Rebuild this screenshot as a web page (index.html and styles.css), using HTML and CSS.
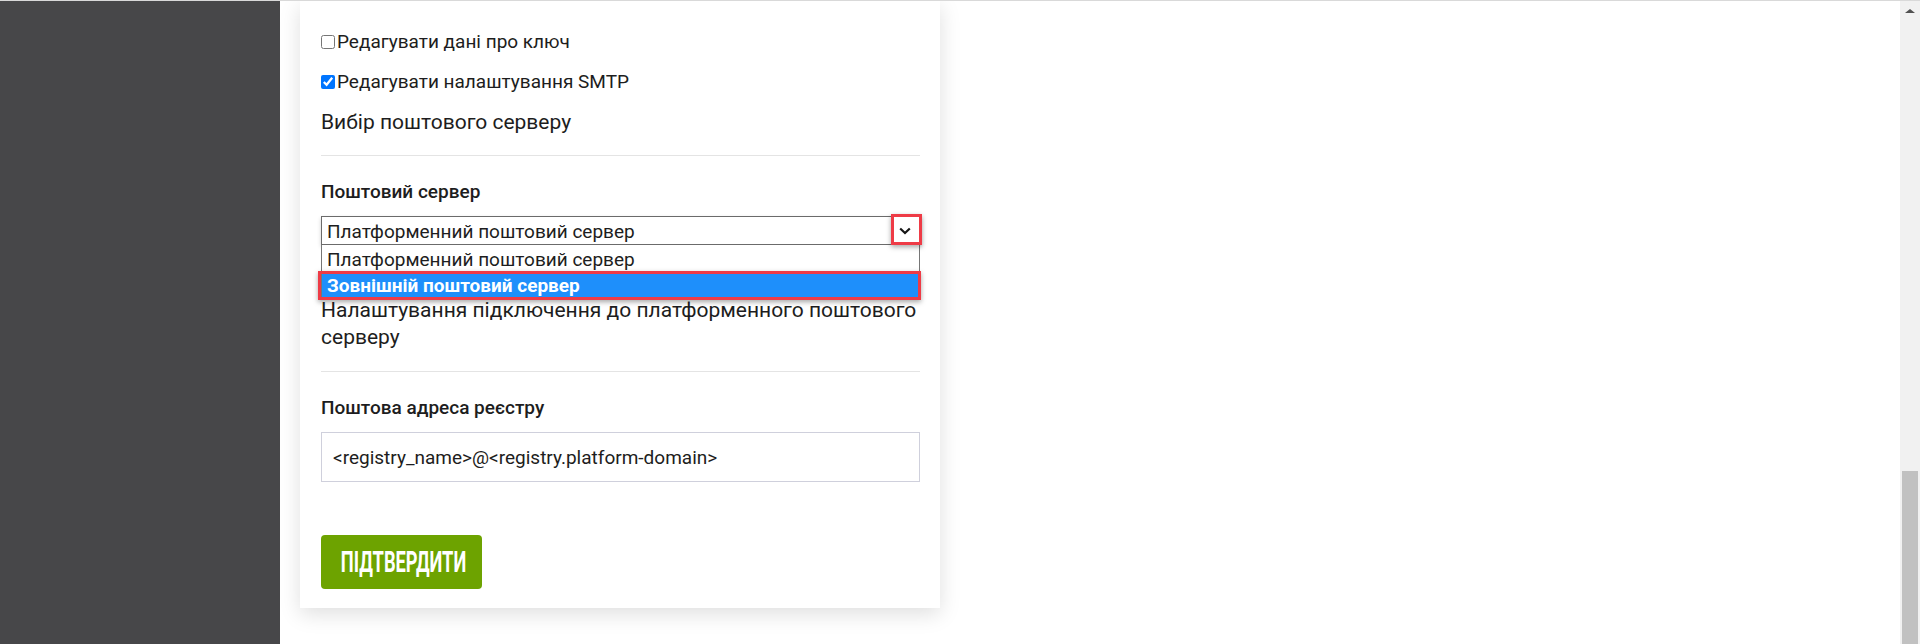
FILE: index.html
```html
<!DOCTYPE html>
<html lang="uk">
<head>
<meta charset="utf-8">
<title>Налаштування SMTP</title>
<link rel="stylesheet" href="styles.css">
</head>
<body>
<div class="app">
  <aside class="sidebar"></aside>
  <main class="main">
    <section class="card">
      <label class="check"><input type="checkbox">Редагувати дані про ключ</label>
      <label class="check"><input type="checkbox" checked>Редагувати налаштування SMTP</label>
      <h2 class="section-title section-title--first">Вибір поштового серверу</h2>
      <hr class="divider">
      <div class="field-label">Поштовий сервер</div>
      <div class="select-wrap">
        <div class="select">
          <span class="select-value">Платформенний поштовий сервер</span>
          <span class="select-arrow"><svg width="12" height="8" viewBox="0 0 12 8"><path d="M1.2 1.5 L6 6 L10.8 1.5" fill="none" stroke="#151515" stroke-width="2.2"/></svg></span>
        </div>
        <ul class="dropdown">
          <li class="option">Платформенний поштовий сервер</li>
          <li class="option option--active">Зовнішній поштовий сервер</li>
        </ul>
        <div class="mark mark--arrow"></div>
        <div class="mark mark--option"></div>
      </div>
      <h2 class="section-title section-title--second">Налаштування підключення до платформенного поштового серверу</h2>
      <hr class="divider">
      <div class="field-label">Поштова адреса реєстру</div>
      <div class="input">&lt;registry_name&gt;@&lt;registry.platform-domain&gt;</div>
      <button class="btn" type="button"><span class="btn-text">ПІДТВЕРДИТИ</span></button>
    </section>
  </main>
  <div class="scrollbar">
    <div class="scroll-up"></div>
    <div class="scroll-track"></div>
    <div class="scroll-thumb"></div>
  </div>
</div>
</body>
</html>
```
FILE: styles.css
```css
* { box-sizing: border-box; }
html, body { margin: 0; padding: 0; height: 100%; overflow: hidden; }
body {
  border-top: 1px solid #d9d9d9;
  font-family: Roboto, "Noto Sans", sans-serif;
  color: #1d1d20;
  background: #ffffff;
}
.app { display: flex; height: 643px; }
.sidebar { width: 280px; flex: none; background: #474749; }
.main { flex: 1; display: flex; align-items: flex-start; padding-left: 20px; }
.card {
  width: 640px;
  background: #fff;
  padding: 29px 20px 19px 21px;
  box-shadow: 0 6px 20px rgba(0,0,0,0.13);
}
.check {
  display: flex;
  align-items: center;
  height: 24px;
  margin-bottom: 16px;
  font-size: 19px;
  line-height: 24px;
}
.check input { width: 14px; height: 14px; margin: 0 2px 0 0; }
.check:nth-child(2) { margin-bottom: 0; }
.section-title {
  margin: 0;
  font-size: 21px;
  font-weight: 400;
  line-height: 27px;
}
.section-title--first { margin-top: 15px; margin-bottom: 19px; }
.section-title--second { margin-top: 52px; margin-bottom: 20px; }
.divider { margin: 0; border: 0; border-top: 1px solid #e4e4e4; }
.field-label {
  margin-top: 24px;
  font-size: 19px;
  line-height: 24px;
  font-weight: 500;
}
.select-wrap { position: relative; margin-top: 12px; }
.select {
  height: 29px;
  border: 1px solid #6b6b6b;
  display: flex;
  align-items: center;
  justify-content: space-between;
  padding: 1px 0 0 5px;
  font-size: 19px;
  box-shadow: 0 2px 4px rgba(0,0,0,0.18);
}
.select-arrow { width: 29px; display: flex; justify-content: center; padding-bottom: 1px; }
.dropdown {
  position: absolute;
  top: 29px;
  left: 0;
  width: 100%;
  margin: 0;
  padding: 0;
  list-style: none;
  background: #fff;
  border: 1px solid #767676;
  border-top: 0;
  font-size: 19px;
}
.option { height: 26px; padding: 3px 0 0 5px; line-height: 23px; }
.option--active { background: #1e8ffb; color: #fff; font-weight: 700; }
.mark {
  position: absolute;
  border: 3px solid #ee3b46;
  box-shadow: 0 2px 5px rgba(0,0,0,0.35);
}
.mark--arrow { left: 570px; top: -2px; width: 31px; height: 31px; }
.mark--option { left: -3px; top: 55px; width: 603px; height: 29px; }
.input {
  margin-top: 12px;
  height: 50px;
  border: 1px solid #cfd0dc;
  padding: 0 0 0 11px;
  display: flex;
  align-items: center;
  font-size: 19px;
}
.btn {
  margin-top: 53px;
  width: 161px;
  height: 54px;
  border: 0;
  border-radius: 4px;
  background: #6da300;
  color: #fff;
  display: flex;
  align-items: center;
  justify-content: center;
  padding: 0 0 0 4px;
  font-family: Roboto, sans-serif;
  cursor: pointer;
}
.btn-text {
  display: inline-block;
  font-size: 29px;
  font-weight: 700;
  transform: scaleX(0.63);
  white-space: nowrap;
}
.scrollbar {
  width: 20px;
  flex: none;
  background: #f1f1f1;
  display: flex;
  flex-direction: column;
  align-items: center;
}
.scroll-up {
  margin-top: 8px;
  width: 0; height: 0;
  border-left: 5px solid transparent;
  border-right: 5px solid transparent;
  border-bottom: 4px solid #505050;
}
.scroll-track { flex: 1; }
.scroll-thumb { width: 16px; height: 173px; background: #c1c1c1; }
```
